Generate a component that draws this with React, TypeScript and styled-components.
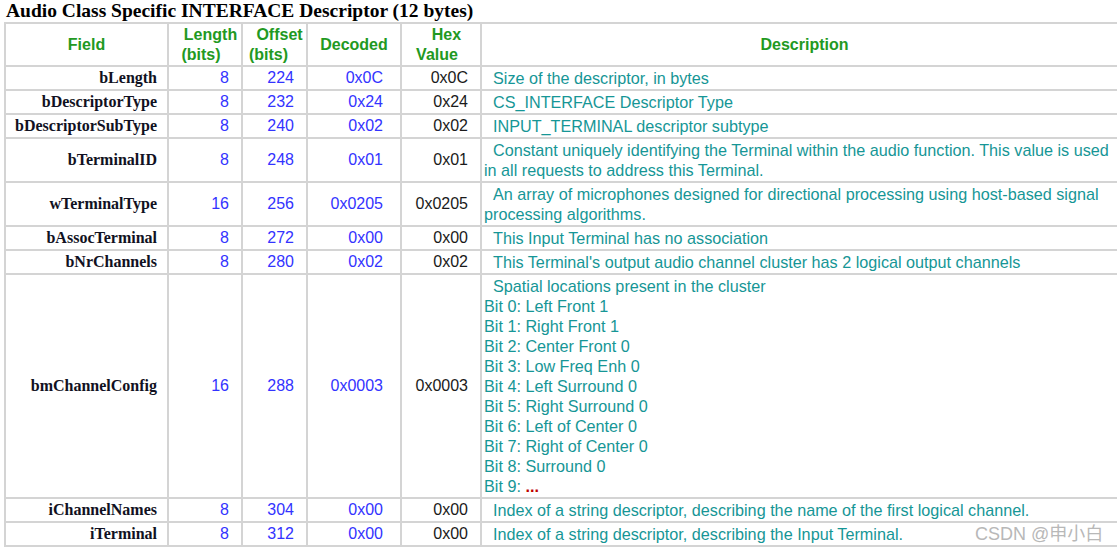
import React from "react";
import styled, { createGlobalStyle } from "styled-components";

const GlobalStyle = createGlobalStyle`
  html, body {
    margin: 0;
    padding: 0;
    background: #ffffff;
    overflow: hidden;
  }
  * { box-sizing: border-box; }
`;

const BORDER = "#d4d4d4";

const Page = styled.div`
  position: relative;
  width: 1117px;
  height: 553px;
  padding-left: 4px;
`;

const Title = styled.div`
  font-family: "Liberation Serif", "Times New Roman", serif;
  font-weight: bold;
  font-size: 19.5px;
  line-height: 22px;
  height: 22px;
  padding-left: 2px;
  color: #000;
  white-space: nowrap;
`;

const Table = styled.table`
  border-collapse: separate;
  border-spacing: 0;
  table-layout: fixed;
  width: 1125px;
  border-left: 2px solid ${BORDER};
  border-top: 2px solid ${BORDER};
`;

const Th = styled.th`
  border-right: 2px solid ${BORDER};
  border-bottom: 2px solid ${BORDER};
  padding: 1px 0 0 0;
  font-family: "Liberation Sans", Arial, sans-serif;
  font-weight: bold;
  font-size: 16px;
  line-height: 20px;
  color: #229922;
  text-align: center;
  vertical-align: middle;
`;

const HeadLine = styled.span<{ $shift: number }>`
  display: block;
  white-space: nowrap;
  padding-left: ${(p) => (p.$shift > 0 ? p.$shift * 2 : 0)}px;
  padding-right: ${(p) => (p.$shift < 0 ? -p.$shift * 2 : 0)}px;
`;

const Td = styled.td`
  border-right: 2px solid ${BORDER};
  border-bottom: 2px solid ${BORDER};
  padding: 1px 0;
  line-height: 20px;
  vertical-align: middle;
  white-space: nowrap;
`;

const FieldCell = styled(Td)`
  font-family: "Liberation Serif", "Times New Roman", serif;
  font-weight: bold;
  font-size: 16px;
  color: #111122;
  text-align: right;
  padding-right: 10px;
`;

const NumCell = styled(Td)<{ $blue?: boolean; $pad: number }>`
  font-family: "Liberation Sans", Arial, sans-serif;
  font-size: 16px;
  color: ${(p) => (p.$blue ? "#3333ff" : "#1a1a1a")};
  text-align: right;
  padding-right: ${(p) => p.$pad}px;
`;

const DescCell = styled(Td)`
  font-family: "Liberation Sans", Arial, sans-serif;
  font-size: 16.2px;
  color: #169696;
  text-align: left;
  padding-left: 2px;
  overflow: hidden;
`;

const DescLine = styled.div`
  white-space: pre;
`;

const Dots = styled.span`
  color: #c00000;
  font-weight: bold;
`;

const Watermark = styled.div`
  position: absolute;
  left: 975px;
  top: 523px;
  font-family: "Liberation Sans", "Noto Sans CJK SC", sans-serif;
  font-size: 18px;
  line-height: 22px;
  color: #b8b8b8;
  white-space: nowrap;
  pointer-events: none;
`;

type Row = {
  field: string;
  len: string;
  off: string;
  dec: string;
  hex: string;
  desc: React.ReactNode[];
};

const S = "\u00a0\u00a0";

const rows: Row[] = [
  { field: "bLength", len: "8", off: "224", dec: "0x0C", hex: "0x0C", desc: [S + "Size of the descriptor, in bytes"] },
  { field: "bDescriptorType", len: "8", off: "232", dec: "0x24", hex: "0x24", desc: [S + "CS_INTERFACE Descriptor Type"] },
  { field: "bDescriptorSubType", len: "8", off: "240", dec: "0x02", hex: "0x02", desc: [S + "INPUT_TERMINAL descriptor subtype"] },
  {
    field: "bTerminalID",
    len: "8",
    off: "248",
    dec: "0x01",
    hex: "0x01",
    desc: [
      S + "Constant uniquely identifying the Terminal within the audio function. This value is used",
      "in all requests to address this Terminal.",
    ],
  },
  {
    field: "wTerminalType",
    len: "16",
    off: "256",
    dec: "0x0205",
    hex: "0x0205",
    desc: [
      S + "An array of microphones designed for directional processing using host-based signal",
      "processing algorithms.",
    ],
  },
  { field: "bAssocTerminal", len: "8", off: "272", dec: "0x00", hex: "0x00", desc: [S + "This Input Terminal has no association"] },
  {
    field: "bNrChannels",
    len: "8",
    off: "280",
    dec: "0x02",
    hex: "0x02",
    desc: [S + "This Terminal's output audio channel cluster has 2 logical output channels"],
  },
  {
    field: "bmChannelConfig",
    len: "16",
    off: "288",
    dec: "0x0003",
    hex: "0x0003",
    desc: [
      S + "Spatial locations present in the cluster",
      "Bit 0: Left Front 1",
      "Bit 1: Right Front 1",
      "Bit 2: Center Front 0",
      "Bit 3: Low Freq Enh 0",
      "Bit 4: Left Surround 0",
      "Bit 5: Right Surround 0",
      "Bit 6: Left of Center 0",
      "Bit 7: Right of Center 0",
      "Bit 8: Surround 0",
      <>
        Bit 9: <Dots>...</Dots>
      </>,
    ],
  },
  {
    field: "iChannelNames",
    len: "8",
    off: "304",
    dec: "0x00",
    hex: "0x00",
    desc: [S + "Index of a string descriptor, describing the name of the first logical channel."],
  },
  {
    field: "iTerminal",
    len: "8",
    off: "312",
    dec: "0x00",
    hex: "0x00",
    desc: [S + "Index of a string descriptor, describing the Input Terminal."],
  },
];

export default function App() {
  return (
    <>
      <GlobalStyle />
      <Page>
        <Title>Audio Class Specific INTERFACE Descriptor (12 bytes)</Title>
        <Table>
          <colgroup>
            <col style={{ width: 163 }} />
            <col style={{ width: 74 }} />
            <col style={{ width: 65 }} />
            <col style={{ width: 94 }} />
            <col style={{ width: 80 }} />
            <col />
          </colgroup>
          <thead>
            <tr>
              <Th>Field</Th>
              <Th>
                <HeadLine $shift={5.5}>Length</HeadLine>
                <HeadLine $shift={-4}>(bits)</HeadLine>
              </Th>
              <Th>
                <HeadLine $shift={5}>Offset</HeadLine>
                <HeadLine $shift={-6}>(bits)</HeadLine>
              </Th>
              <Th>Decoded</Th>
              <Th>
                <HeadLine $shift={5.5}>Hex</HeadLine>
                <HeadLine $shift={-4}>Value</HeadLine>
              </Th>
              <Th>Description</Th>
            </tr>
          </thead>
          <tbody>
            {rows.map((r) => (
              <tr key={r.field}>
                <FieldCell>{r.field}</FieldCell>
                <NumCell $blue $pad={12}>{r.len}</NumCell>
                <NumCell $blue $pad={12}>{r.off}</NumCell>
                <NumCell $blue $pad={17}>{r.dec}</NumCell>
                <NumCell $pad={12}>{r.hex}</NumCell>
                <DescCell>
                  {r.desc.map((d, i) => (
                    <DescLine key={i}>{d}</DescLine>
                  ))}
                </DescCell>
              </tr>
            ))}
          </tbody>
        </Table>
        <Watermark>CSDN @申小白</Watermark>
      </Page>
    </>
  );
}
